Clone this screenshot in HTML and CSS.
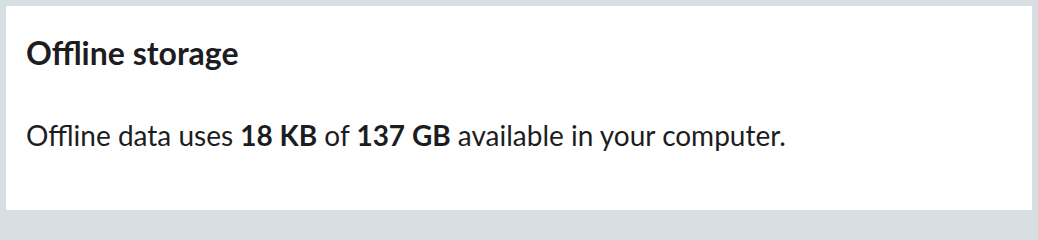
FILE: index.html
```html
<!DOCTYPE html>
<html>
<head>
<meta charset="utf-8">
<link rel="stylesheet" href="styles.css">
</head>
<body>
<section class="card">
  <h2 class="title">Offline storage</h2>
  <p class="desc">Offline data uses <strong>18 KB</strong> of <strong>137 GB</strong> available in your computer.</p>
</section>
</body>
</html>
```
FILE: styles.css
```css
html, body {
  margin: 0;
  padding: 0;
}
body {
  background: #d8dfe3;
  padding: 6px;
  box-sizing: border-box;
  width: 1038px;
  height: 216px;
  font-family: Lato, "Noto Sans", sans-serif;
  color: #1d1d1f;
}
.card {
  background: #ffffff;
  height: 204px;
  box-sizing: border-box;
  padding: 27px 20px 0 20px;
}
.title {
  margin: 0;
  font-size: 32px;
  font-weight: 700;
  line-height: 40px;
}
.desc {
  margin: 44px 0 0 0;
  font-size: 28px;
  line-height: 36px;
}
.desc strong {
  font-weight: 700;
}
```
